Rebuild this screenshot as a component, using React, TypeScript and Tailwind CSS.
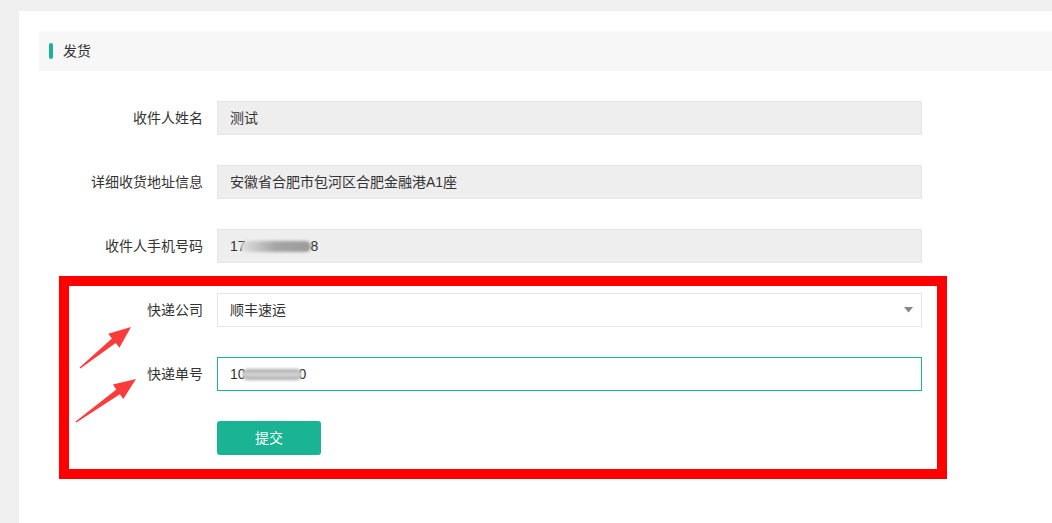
const font = { fontFamily: '"Liberation Sans", "Noto Sans CJK SC", sans-serif' };

const labelCls = "w-[164px] mr-[14px] text-right text-[14px] text-[#333] shrink-0";
const boxCls = "w-[705px] h-[34px] flex items-center pl-[12px] text-[14px] text-[#333]";

const Row = ({ label, children }: { label: string; children: React.ReactNode }) => (
    <div className="flex items-center">
        <span className={labelCls}>{label}</span>
        {children}
    </div>
);

const Blur = ({ w, cls }: { w: string; cls: string }) => (
    <span className={`inline-block h-[11px] rounded-full blur-[1.5px] ${w} ${cls}`} />
);

export default function App() {
    return (
        <div className="relative w-[1052px] h-[523px] overflow-hidden bg-[#f0f0f0] pl-[19px] pt-[11px]" style={font}>
            {/* White panel */}
            <div className="h-full bg-white p-[20px] pr-0">
                {/* Header */}
                <div className="h-[40px] bg-[#f7f7f7] flex items-center pl-[10px]">
                    <span className="w-[4px] h-[16px] rounded-sm bg-[#1ab394]" />
                    <span className="ml-[10px] text-[14px] text-[#333]">发货</span>
                </div>

                {/* Form */}
                <div className="mt-[30px] flex flex-col gap-[30px]">
                    <Row label="收件人姓名">
                        <div className={`${boxCls} bg-[#eeeeee] border border-[#e5e6e7]`}>测试</div>
                    </Row>
                    <Row label="详细收货地址信息">
                        <div className={`${boxCls} bg-[#eeeeee] border border-[#e5e6e7]`}>安徽省合肥市包河区合肥金融港A1座</div>
                    </Row>
                    <Row label="收件人手机号码">
                        <div className={`${boxCls} bg-[#eeeeee] border border-[#e5e6e7]`}>
                            <span>17</span>
                            <Blur w="w-[70px]" cls="-ml-[5px] bg-gradient-to-r from-[#e0e0e0] via-[#a5a5a5] to-[#9a9a9a]" />
                            <span>8</span>
                        </div>
                    </Row>
                    <Row label="快递公司">
                        <div className={`${boxCls} bg-white border border-[#e5e6e7] justify-between pr-[8px]`}>
                            <span>顺丰速运</span>
                            <svg width="9" height="6" viewBox="0 0 9 6">
                                <path d="M0 0 H9 L4.5 5.5 Z" fill="#888" />
                            </svg>
                        </div>
                    </Row>
                    <Row label="快递单号">
                        <div className={`${boxCls} bg-white border border-[#1ab394]`}>
                            <span>1</span>
                            <span className="-mr-[4px]">0</span>
                            <Blur w="w-[60px]" cls="bg-gradient-to-b from-[#a0a0a0] via-[#dadada] to-[#a0a0a0]" />
                            <span className="-ml-[3px]">0</span>
                        </div>
                    </Row>
                    <div className="flex">
                        <span className="w-[164px] mr-[14px] shrink-0" />
                        <button className="w-[104px] h-[34px] rounded-[3px] bg-[#1ab394] text-white text-[14px]">提交</button>
                    </div>
                </div>
            </div>

            {/* Annotation: red box */}
            <div className="absolute left-[59px] top-[276px] w-[888px] h-[203px] border-[10px] border-[#ff0000] pointer-events-none" />

            {/* Annotation: arrows */}
            <svg className="absolute left-0 top-0 pointer-events-none" width="1052" height="523">
                <polygon
                    fill="#fc3b3b"
                    points="79.6,367.5 111.9,338.5 108.2,333.8 131,327 119.4,347.8 115.7,343.1 80.4,368.5"
                />
                <polygon
                    fill="#fc3b3b"
                    points="75.6,421.4 116.3,389.4 112.9,384.5 136,379 123.3,399.1 119.9,394.2 76.4,422.6"
                />
            </svg>
        </div>
    );
}
